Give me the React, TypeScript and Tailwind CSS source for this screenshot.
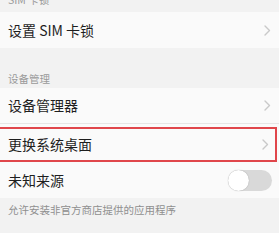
import React, { useState } from 'react';

const Chevron = () => (
  <svg width="7" height="11" viewBox="0 0 7 11" className="shrink-0">
    <path d="M1 1l4.5 4.5L1 10" fill="none" stroke="#c9c9c9" strokeWidth="1.4" strokeLinecap="round" strokeLinejoin="round" />
  </svg>
);

const Toggle = ({ on, onChange }: { on: boolean; onChange: () => void }) => (
  <button
    onClick={onChange}
    className={`relative w-[44px] h-[21px] rounded-full ${on ? 'bg-[#4cd964]' : 'bg-[#d9d9d9]'}`}
    aria-label="toggle"
  >
    <span
      className={`absolute top-0 w-[21px] h-[21px] rounded-full bg-white shadow-[0_0_1px_rgba(0,0,0,0.35)] ${on ? 'right-0' : 'left-0'}`}
    />
  </button>
);

export default function App() {
  const [unknownSources, setUnknownSources] = useState(false);

  return (
    <div className="w-[279px] h-[233px] overflow-hidden bg-[#f2f2f2] font-['Noto_Sans_CJK_SC',sans-serif] text-[#1e1e1e]">
      {/* SIM section header (cut off at top) */}
      <div className="h-[12px] overflow-hidden px-2">
        <p className="-mt-[7px] leading-[14px] text-[10.5px] text-[#9a9a9a]">SIM 卡锁</p>
      </div>

      <div className="h-[36px] bg-[#fafafa] flex items-center justify-between pl-2 pr-[8px]">
        <span className="text-[14px]">设置 SIM 卡锁</span>
        <Chevron />
      </div>

      {/* device management section */}
      <div className="h-[40px] flex items-end pb-[2px] px-2">
        <p className="leading-[14px] text-[10.5px] text-[#9a9a9a]">设备管理</p>
      </div>

      <div className="bg-[#fafafa]">
        <div className="h-[36px] flex items-center justify-between pl-2 pr-[8px] border-b border-[#e6e6e6]">
          <span className="text-[14px]">设备管理器</span>
          <Chevron />
        </div>
        <div className="h-[38px] pt-[3px] pr-[2px]">
          <div className="h-full border-2 border-l-0 border-[#e0464b] flex items-center justify-between pl-2 pr-[6px]">
            <span className="text-[14px]">更换系统桌面</span>
            <Chevron />
          </div>
        </div>
        <div className="h-[36px] flex items-center justify-between pl-2 pr-[7px]">
          <span className="text-[14px]">未知来源</span>
          <Toggle on={unknownSources} onChange={() => setUnknownSources(!unknownSources)} />
        </div>
      </div>

      <div className="pt-[5px] px-2">
        <p className="leading-[14px] text-[10.5px] text-[#8f8f8f]">允许安装非官方商店提供的应用程序</p>
      </div>
    </div>
  );
}
